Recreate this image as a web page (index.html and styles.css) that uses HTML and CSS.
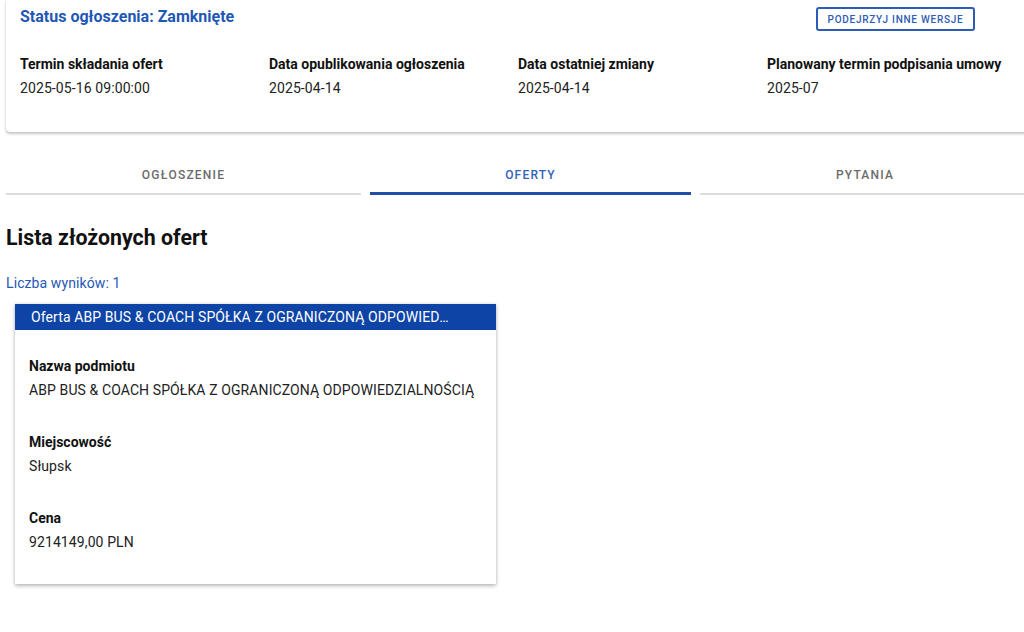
FILE: index.html
```html
<!DOCTYPE html>
<html lang="pl">
<head>
<meta charset="utf-8">
<title>Oferty</title>
<link rel="stylesheet" href="styles.css">
</head>
<body>
<div class="page">
  <section class="info-card">
    <div class="info-head">
      <h3 class="status">Status ogłoszenia: Zamknięte</h3>
      <button class="outline-btn">PODEJRZYJ INNE WERSJE</button>
    </div>
    <div class="info-grid">
      <div class="info-item">
        <div class="label">Termin składania ofert</div>
        <div class="value">2025-05-16 09:00:00</div>
      </div>
      <div class="info-item">
        <div class="label">Data opublikowania ogłoszenia</div>
        <div class="value">2025-04-14</div>
      </div>
      <div class="info-item">
        <div class="label">Data ostatniej zmiany</div>
        <div class="value">2025-04-14</div>
      </div>
      <div class="info-item">
        <div class="label">Planowany termin podpisania umowy</div>
        <div class="value">2025-07</div>
      </div>
    </div>
  </section>

  <nav class="tabs">
    <div class="tab">OGŁOSZENIE</div>
    <div class="tab active">OFERTY</div>
    <div class="tab">PYTANIA</div>
  </nav>

  <h2 class="section-title">Lista złożonych ofert</h2>
  <div class="count">Liczba wyników: 1</div>

  <article class="offer-card">
    <div class="offer-head">Oferta ABP BUS &amp; COACH SPÓŁKA Z OGRANICZONĄ ODPOWIEDZIALNOŚCIĄ</div>
    <div class="offer-body">
      <div class="field">
        <div class="label">Nazwa podmiotu</div>
        <div class="value">ABP BUS &amp; COACH SPÓŁKA Z OGRANICZONĄ ODPOWIEDZIALNOŚCIĄ</div>
      </div>
      <div class="field">
        <div class="label">Miejscowość</div>
        <div class="value">Słupsk</div>
      </div>
      <div class="field">
        <div class="label">Cena</div>
        <div class="value">9214149,00 PLN</div>
      </div>
    </div>
  </article>
</div>
</body>
</html>
```

FILE: styles.css
```css
html {
  overflow: hidden;
  background: #ffffff;
}

body {
  margin: 0;
  padding: 0;
  min-height: 632px;
  font-family: Roboto, "Noto Sans", "Liberation Sans", sans-serif;
  font-size: 14px;
  color: #1b1b1b;
}

.page {
  width: 1024px;
  margin-left: 6px;
}

.info-card {
  background: #fff;
  border-radius: 0 0 4px 4px;
  box-shadow: 0 2px 3px rgba(0,0,0,0.22), 0 0 1px rgba(0,0,0,0.25);
  padding: 7px 14px 32px 14px;
}

.info-head {
  display: flex;
  justify-content: space-between;
  align-items: flex-start;
}

.status {
  margin: 0;
  font-size: 16px;
  line-height: 20px;
  font-weight: 700;
  color: #1f57b5;
}

.outline-btn {
  margin-right: 41px;
  height: 24px;
  width: 159px;
  padding: 0;
  border: 2px solid #2d5cb6;
  border-radius: 3px;
  background: #fff;
  color: #2d5cb6;
  font-family: Roboto, "Noto Sans", sans-serif;
  font-size: 10px;
  font-weight: 500;
  letter-spacing: 0.75px;
}

.info-grid {
  display: grid;
  grid-template-columns: repeat(4, 249px);
  margin-top: 21px;
}

.label {
  font-weight: 700;
  line-height: 24px;
  color: #111;
}

.value {
  line-height: 24px;
  color: #222;
  letter-spacing: 0.1px;
}

.tabs {
  display: grid;
  grid-template-columns: 355px 321px 330px;
  column-gap: 9px;
  margin-top: 16px;
}

.tab {
  text-align: center;
  font-size: 12px;
  font-weight: 500;
  letter-spacing: 1.2px;
  line-height: 20px;
  color: #6b6b6b;
  padding: 17px 0 8px;
  border-bottom: 2px solid #dcdcdc;
}

.tab.active {
  color: #3163bb;
  padding-bottom: 7px;
  border-bottom: 3px solid #1f4fa8;
}

.section-title {
  margin: 29px 0 0;
  font-size: 21.33px;
  line-height: 28px;
  font-weight: 700;
  color: #111;
}

.count {
  margin-top: 21px;
  line-height: 20px;
  color: #2459b6;
  letter-spacing: 0.1px;
}

.offer-card {
  width: 481px;
  margin: 11px 0 0 9px;
  background: #fff;
  box-shadow: 0 2px 4px rgba(0,0,0,0.25), 0 0 3px rgba(0,0,0,0.12);
}

.offer-head {
  background: #0d44a6;
  height: 26px;
  line-height: 26px;
  padding: 0 44px 0 16px;
  color: #fff;
  letter-spacing: 0.1px;
  white-space: nowrap;
  overflow: hidden;
  text-overflow: ellipsis;
}

.offer-body {
  padding: 24px 14px 30px;
  display: flex;
  flex-direction: column;
  gap: 28px;
}
```
